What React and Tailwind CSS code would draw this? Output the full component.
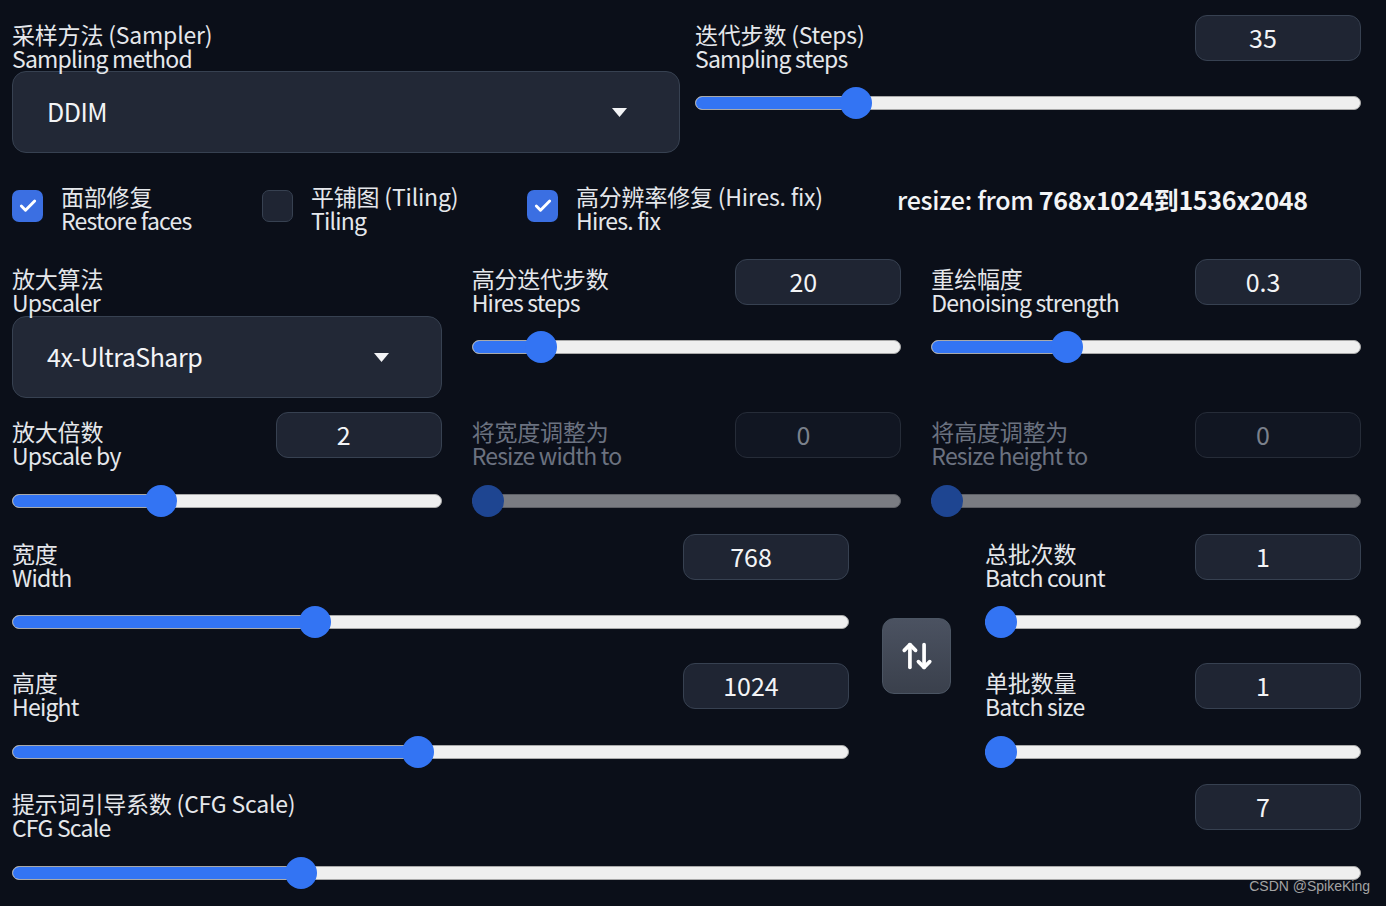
import React from 'react';
import { ArrowUpDown, Check } from 'lucide-react';

const font = { fontFamily: '"Noto Sans CJK SC", "Noto Sans", sans-serif' };

// two-line label: chinese first, english under it
const Label = ({ zh, en, disabled, className = '' }) => (
    <div className={`text-[23px] leading-[24px] ${disabled ? 'text-[#6b7280]' : 'text-[#e5e7eb]'} ${className}`}>
        <div className="tracking-[-0.2px]">{zh}</div>
        <div className="tracking-[-0.8px]">{en}</div>
    </div>
);

const NumberBox = ({ value, disabled }) => (
    <div
        className={`w-[166px] h-[46px] shrink-0 rounded-[12px] border flex items-center justify-center pr-[30px] text-[25px] ${
            disabled ? 'bg-[#111622] border-[#262c38] text-[#7b818c]' : 'bg-[#1f2533] border-[#374151] text-[#f3f4f6]'
        }`}
    >
        {value}
    </div>
);

const Slider = ({ pct, disabled, className = '' }) => (
    <div className={`relative h-[32px] flex items-center ${className}`}>
        <div
            className={`h-[14px] w-full rounded-full border overflow-hidden ${
                disabled ? 'bg-[#7a7c82] border-[#5d5f65]' : 'bg-[#efefef] border-[#a9a9a9]'
            }`}
        >
            {!disabled && (
                <div className="h-full bg-[#3374f3]" style={{ width: `calc(16px + ${pct} * (100% - 32px))` }} />
            )}
        </div>
        <div
            className={`absolute top-0 w-[32px] h-[32px] rounded-full ${disabled ? 'bg-[#1e4591]' : 'bg-[#3374f3]'}`}
            style={{ left: `calc(${pct} * (100% - 32px))` }}
        />
    </div>
);

const SliderField = ({ zh, en, value, pct, disabled, labelTop = 'mt-[7px]', sliderTop = 'mt-[17px]' }) => (
    <div>
        <div className="flex justify-between items-start">
            <Label zh={zh} en={en} disabled={disabled} className={labelTop} />
            <NumberBox value={value} disabled={disabled} />
        </div>
        <Slider pct={pct} disabled={disabled} className={sliderTop} />
    </div>
);

const Dropdown = ({ value, className = '' }) => (
    <div
        className={`rounded-[14px] border border-[#374151] bg-[#222836] flex items-center justify-between pl-[34px] pr-[52px] ${className}`}
    >
        <span className="text-[25px] text-[#f3f4f6] tracking-[-0.5px]">{value}</span>
        <svg width="15" height="9" viewBox="0 0 15 9">
            <path d="M0 0 L15 0 L7.5 9 Z" fill="#f3f4f6" />
        </svg>
    </div>
);

const CheckItem = ({ checked, zh, en, className = '' }) => (
    <div className={`flex items-start ${className}`}>
        <div
            className={`w-[31px] h-[32px] mt-[6px] rounded-[7px] flex items-center justify-center shrink-0 ${
                checked ? 'bg-[#3b6fe2]' : 'bg-[#1f2533] border border-[#374151]'
            }`}
        >
            {checked && <Check size={20} strokeWidth={3.5} color="#ffffff" />}
        </div>
        <Label zh={zh} en={en} className="ml-[18px]" />
    </div>
);

const App = () => {
    return (
        <div className="relative w-full h-[906px] bg-[#0b0f19] pl-[12px] pr-[25px] pt-[15px] overflow-hidden" style={font}>
            {/* sampler + steps */}
            <div className="grid grid-cols-[668px_1fr] gap-[15px]">
                <div>
                    <Label zh="采样方法 (Sampler)" en="Sampling method" className="mt-[7px]" />
                    <Dropdown value="DDIM" className="h-[82px] mt-[1px]" />
                </div>
                <SliderField zh="迭代步数 (Steps)" en="Sampling steps" value="35" pct={0.228} />
            </div>

            {/* checkboxes */}
            <div className="flex items-start mt-[31px]">
                <CheckItem checked zh="面部修复" en="Restore faces" className="w-[250px]" />
                <CheckItem zh="平铺图 (Tiling)" en="Tiling" className="w-[265px]" />
                <CheckItem checked zh="高分辨率修复 (Hires. fix)" en="Hires. fix" className="w-[370px]" />
                <div className="text-[25px] leading-[30px] text-[#f3f4f6] font-medium tracking-[-0.3px]">
                    resize: from <span className="font-bold">768x1024到1536x2048</span>
                </div>
            </div>

            {/* hires options */}
            <div className="grid grid-cols-3 gap-x-[30px] mt-[27px]">
                <div>
                    <Label zh="放大算法" en="Upscaler" className="mt-[7px]" />
                    <Dropdown value="4x-UltraSharp" className="h-[82px] mt-[2px] pr-[50px]" />
                </div>
                <SliderField zh="高分迭代步数" en="Hires steps" value="20" pct={0.133} />
                <SliderField zh="重绘幅度" en="Denoising strength" value="0.3" pct={0.3} />
            </div>
            <div className="grid grid-cols-3 gap-x-[30px] mt-[14px]">
                <SliderField zh="放大倍数" en="Upscale by" value="2" pct={0.334} sliderTop="mt-[18px]" />
                <SliderField zh="将宽度调整为" en="Resize width to" value="0" pct={0} disabled sliderTop="mt-[18px]" />
                <SliderField zh="将高度调整为" en="Resize height to" value="0" pct={0} disabled sliderTop="mt-[18px]" />
            </div>

            {/* size + batch */}
            <div className="flex mt-[17px]">
                <div className="w-[837px] shrink-0">
                    <SliderField zh="宽度" en="Width" value="768" pct={0.356} />
                    <div className="mt-[25px]">
                        <SliderField zh="高度" en="Height" value="1024" pct={0.484} sliderTop="mt-[18px]" />
                    </div>
                </div>
                <div className="w-[69px] shrink-0 ml-[33px] self-center mt-[9px]">
                    <div className="h-[76px] rounded-[12px] border border-[#4b5563] bg-gradient-to-b from-[#4b5261] to-[#3a404c] flex items-center justify-center">
                        <ArrowUpDown size={34} strokeWidth={2.6} color="#ffffff" />
                    </div>
                </div>
                <div className="flex-1 ml-[34px]">
                    <SliderField zh="总批次数" en="Batch count" value="1" pct={0} />
                    <div className="mt-[25px]">
                        <SliderField zh="单批数量" en="Batch size" value="1" pct={0} sliderTop="mt-[18px]" />
                    </div>
                </div>
            </div>

            {/* cfg */}
            <div className="mt-[16px]">
                <SliderField zh="提示词引导系数 (CFG Scale)" en="CFG Scale" value="7" pct={0.207} sliderTop="mt-[18px]" />
            </div>

            <div
                className="absolute right-[16px] bottom-[9px] text-[14px] text-[#a3a3a3]"
                style={{ fontFamily: '"Liberation Sans", Arial, sans-serif' }}
            >
                CSDN @SpikeKing
            </div>
        </div>
    );
};

export default App;
